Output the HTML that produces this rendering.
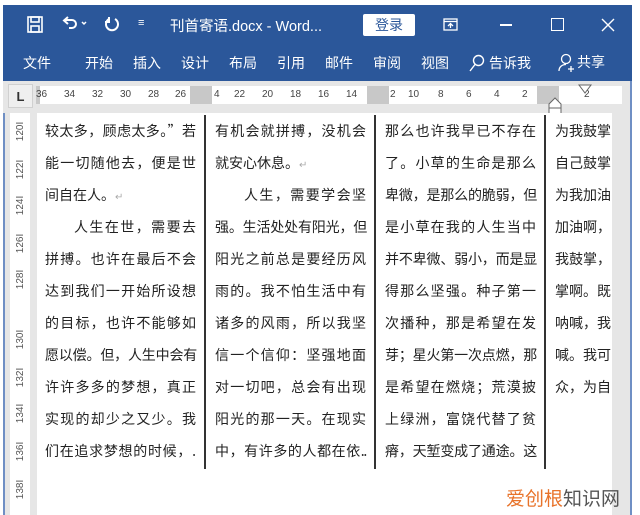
<!DOCTYPE html>
<html><head><meta charset="utf-8"><style>
*{margin:0;padding:0;box-sizing:border-box}
body{width:640px;height:515px;overflow:hidden;background:#fff;position:relative;font-family:"Liberation Sans","Noto Sans CJK SC",sans-serif}
.a{position:absolute}
#blue{left:3px;top:5px;width:629px;height:76px;background:#2b579a;color:#fff}
.t{position:absolute;font-size:14px;color:#fff;white-space:nowrap}
#gray{left:3px;top:81px;width:629px;height:434px;background:#e6e6e6}
.rn{position:absolute;top:89px;font-size:10px;color:#444;font-family:"Liberation Sans",sans-serif}
.ln{position:absolute;width:151px;height:20px;font-size:14px;line-height:20px;color:#222;white-space:nowrap;text-align:justify;text-align-last:justify;font-family:"Noto Sans CJK SC",sans-serif}
.nl{text-align-last:left}
.sq{letter-spacing:-1.3px}
.div{position:absolute;top:115px;width:2px;height:354px;background:#333}
.vn{position:absolute;left:11px;font-size:10px;color:#555;transform:rotate(-90deg);font-family:"Liberation Sans",sans-serif}
</style></head><body>
<div class="a" style="left:0;top:0;width:640px;height:5px;background:#fff"></div>
<div class="a" id="blue">
<svg class="a" style="left:24px;top:11px" width="16" height="17" viewBox="0 0 16 17" fill="none" stroke="#fff" stroke-width="1.6"><rect x="1" y="1" width="14" height="15"/><rect x="4" y="1" width="8" height="5"/><rect x="4" y="10" width="8" height="6"/></svg>
<svg class="a" style="left:58px;top:11px" width="28" height="16" viewBox="0 0 28 16" fill="none" stroke="#fff" stroke-width="2"><path d="M4 4h7a4 4 0 0 1 0 8H8"/><path d="M7 1L3 4.5L7 8"/><path d="M21 6l2 2l2-2" stroke-width="1.5"/></svg>
<svg class="a" style="left:101px;top:11px" width="16" height="17" viewBox="0 0 16 17" fill="none" stroke="#fff" stroke-width="2"><path d="M5 3a6 6 0 1 0 6 0"/><path d="M5 1v5H1" /></svg>
<div class="t" style="left:135px;top:12px;font-size:11px">≡</div>
<div class="t" style="left:167px;top:10px;font-size:14.5px">刊首寄语.docx - Word...</div>
<div class="a" style="left:360px;top:9px;width:52px;height:22px;background:#fff;border-radius:2px;color:#2b579a;font-size:14px;text-align:center;line-height:22px">登录</div>
<svg class="a" style="left:440px;top:13px" width="15" height="13" viewBox="0 0 15 13" fill="none" stroke="#fff" stroke-width="1.3"><rect x="1" y="1" width="13" height="11"/><path d="M1 3.5h13M7.5 10V5.5M5 8l2.5-2.5L10 8"/></svg>
<div class="a" style="left:497px;top:19px;width:12px;height:1.5px;background:#fff"></div>
<div class="a" style="left:548px;top:13px;width:13px;height:13px;border:1.3px solid #fff"></div>
<svg class="a" style="left:598px;top:13px" width="14" height="14" viewBox="0 0 14 14" stroke="#fff" stroke-width="1.4"><path d="M1 1l12 12M13 1L1 13"/></svg>
<div class="t" style="left:20px;top:48px">文件</div>
<div class="t" style="left:82px;top:48px">开始</div>
<div class="t" style="left:130px;top:48px">插入</div>
<div class="t" style="left:178px;top:48px">设计</div>
<div class="t" style="left:226px;top:48px">布局</div>
<div class="t" style="left:274px;top:48px">引用</div>
<div class="t" style="left:322px;top:48px">邮件</div>
<div class="t" style="left:370px;top:48px">审阅</div>
<div class="t" style="left:418px;top:48px">视图</div>
<svg class="a" style="left:466px;top:49px" width="16" height="18" viewBox="0 0 16 18" fill="none" stroke="#fff" stroke-width="1.4"><circle cx="9.5" cy="6.5" r="5"/><path d="M6 10.5L1 17"/></svg>
<div class="t" style="left:486px;top:48px">告诉我</div>
<svg class="a" style="left:555px;top:48px" width="18" height="20" viewBox="0 0 18 20" fill="none" stroke="#fff" stroke-width="1.3"><circle cx="8" cy="6" r="4.5"/><path d="M1 18c0-4 3-6.5 7-6.5M13 13v6M10 16h6"/></svg>
<div class="t" style="left:574px;top:47px">共享</div>
</div>
<div class="a" id="gray"></div>
<div class="a" style="left:0;top:81px;width:3px;height:434px;background:#fff"></div>
<div class="a" style="left:3px;top:113px;width:2px;height:402px;background:#6f8fc4"></div>
<div class="a" style="left:632px;top:5px;width:8px;height:510px;background:#fff"></div>
<div class="a" style="left:630px;top:81px;width:2px;height:434px;background:#6f8fc4"></div>
<div class="a" style="left:8px;top:84px;width:25px;height:24px;background:#efefef;border:1px solid #d0d0d0;font-size:13px;text-align:center;line-height:24px;color:#333;font-weight:bold">L</div>
<div class="a" style="left:36px;top:86px;width:586px;height:18px;background:#fff"></div>
<div class="a" style="left:36px;top:86px;width:4px;height:18px;background:#c8c8c8"></div>
<div class="a" style="left:190px;top:86px;width:22px;height:18px;background:#c8c8c8"></div>
<div class="a" style="left:367px;top:86px;width:22px;height:18px;background:#c8c8c8"></div>
<div class="a" style="left:537px;top:86px;width:22px;height:18px;background:#c8c8c8"></div>
<div class="rn" style="left:36px">36</div><div class="rn" style="left:64px">34</div><div class="rn" style="left:92px">32</div><div class="rn" style="left:120px">30</div><div class="rn" style="left:148px">28</div><div class="rn" style="left:175px">26</div>
<div class="rn" style="left:214px">4</div><div class="rn" style="left:234px">22</div><div class="rn" style="left:262px">20</div><div class="rn" style="left:290px">18</div><div class="rn" style="left:318px">16</div><div class="rn" style="left:346px">14</div>
<div class="rn" style="left:390px">2</div><div class="rn" style="left:408px">10</div><div class="rn" style="left:438px">8</div><div class="rn" style="left:466px">6</div><div class="rn" style="left:494px">4</div><div class="rn" style="left:522px">2</div><div class="rn" style="left:584px">2</div>
<svg class="a" style="left:548px;top:97px" width="14" height="18" viewBox="0 0 14 18" fill="#fff" stroke="#666"><path d="M1 7L7 1L13 7V11H1Z"/><rect x="1" y="11" width="12" height="6"/></svg>
<svg class="a" style="left:578px;top:84px" width="14" height="10" viewBox="0 0 14 10" fill="#fff" stroke="#666"><path d="M1 1H13L7 9Z"/></svg>
<div class="a" style="left:10px;top:113px;width:20px;height:402px;background:#fff"></div>
<div class="a" style="left:37px;top:113px;width:575px;height:402px;background:#fff"></div>
<div class="vn" style="top:126px">120I</div><div class="vn" style="top:164px">122I</div><div class="vn" style="top:200px">124I</div><div class="vn" style="top:238px">126I</div><div class="vn" style="top:274px">128I</div><div class="vn" style="top:334px">130I</div><div class="vn" style="top:372px">132I</div><div class="vn" style="top:408px">134I</div><div class="vn" style="top:446px">136I</div><div class="vn" style="top:484px">138I</div>
<div class="div" style="left:204px"></div><div class="div" style="left:374px"></div><div class="div" style="left:544px"></div>

<div class="ln" style="left:45px;top:121px">较太多，顾虑太多。”若</div>
<div class="ln" style="left:45px;top:153px">能一切随他去，便是世</div>
<div class="ln nl" style="left:45px;top:185px">间自在人。<span style="color:#aaa;font-size:10px">↵</span></div>
<div class="ln" style="left:45px;top:217px;padding-left:29px">人生在世，需要去</div>
<div class="ln" style="left:45px;top:249px">拼搏。也许在最后不会</div>
<div class="ln" style="left:45px;top:281px">达到我们一开始所设想</div>
<div class="ln" style="left:45px;top:313px">的目标，也许不能够如</div>
<div class="ln sq" style="left:45px;top:345px">愿以偿。但，人生中会有</div>
<div class="ln" style="left:45px;top:377px">许许多多的梦想，真正</div>
<div class="ln" style="left:45px;top:409px">实现的却少之又少。我</div>
<div class="ln" style="left:45px;top:441px">们在追求梦想的时候，.</div>

<div class="ln" style="left:215px;top:121px">有机会就拼搏，没机会</div>
<div class="ln nl" style="left:215px;top:153px">就安心休息。<span style="color:#aaa;font-size:10px">↵</span></div>
<div class="ln" style="left:215px;top:185px;padding-left:29px">人生，需要学会坚</div>
<div class="ln sq" style="left:215px;top:217px">强。生活处处有阳光，但</div>
<div class="ln" style="left:215px;top:249px">阳光之前总是要经历风</div>
<div class="ln" style="left:215px;top:281px">雨的。我不怕生活中有</div>
<div class="ln" style="left:215px;top:313px">诸多的风雨，所以我坚</div>
<div class="ln" style="left:215px;top:345px">信一个信仰：坚强地面</div>
<div class="ln" style="left:215px;top:377px">对一切吧，总会有出现</div>
<div class="ln" style="left:215px;top:409px">阳光的那一天。在现实</div>
<div class="ln sq" style="left:215px;top:441px">中，有许多的人都在依..</div>

<div class="ln" style="left:385px;top:121px">那么也许我早已不存在</div>
<div class="ln" style="left:385px;top:153px">了。小草的生命是那么</div>
<div class="ln sq" style="left:385px;top:185px">卑微，是那么的脆弱，但</div>
<div class="ln" style="left:385px;top:217px">是小草在我的人生当中</div>
<div class="ln sq" style="left:385px;top:249px">并不卑微、弱小，而是显</div>
<div class="ln" style="left:385px;top:281px">得那么坚强。种子第一</div>
<div class="ln" style="left:385px;top:313px">次播种，那是希望在发</div>
<div class="ln sq" style="left:385px;top:345px">芽；星火第一次点燃，那</div>
<div class="ln" style="left:385px;top:377px">是希望在燃烧；荒漠披</div>
<div class="ln" style="left:385px;top:409px">上绿洲，富饶代替了贫</div>
<div class="ln sq" style="left:385px;top:441px">瘠，天堑变成了通途。这</div>

<div class="a" style="left:555px;top:113px;width:57px;height:360px;overflow:hidden">
<div class="ln nl" style="left:0;top:8px;width:80px">为我鼓掌</div>
<div class="ln nl" style="left:0;top:40px;width:80px">自己鼓掌</div>
<div class="ln nl" style="left:0;top:72px;width:80px">为我加油</div>
<div class="ln nl" style="left:0;top:104px;width:80px">加油啊，</div>
<div class="ln nl" style="left:0;top:136px;width:80px">我鼓掌，</div>
<div class="ln nl" style="left:0;top:168px;width:80px">掌啊。既</div>
<div class="ln nl" style="left:0;top:200px;width:80px">呐喊，我</div>
<div class="ln nl" style="left:0;top:232px;width:80px">喊。我可</div>
<div class="ln nl" style="left:0;top:264px;width:80px">众，为自</div>
</div>
<div class="a" style="left:506px;top:484px;font-size:19px;white-space:nowrap;font-family:'Noto Sans CJK SC',sans-serif;color:#555"><span style="color:#e8732a">爱创根</span>知识网</div>
</body></html>
